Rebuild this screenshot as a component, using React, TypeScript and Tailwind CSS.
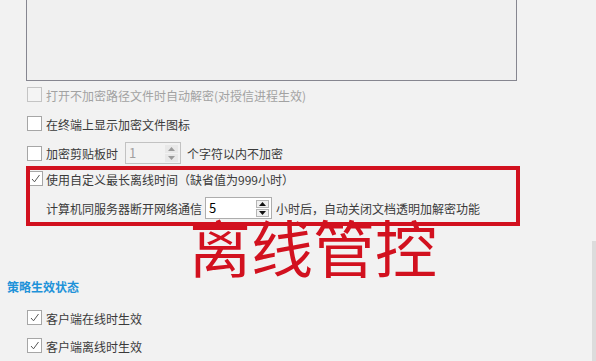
import React from "react";

const Check = () => (
  <svg width="15" height="15" viewBox="0 0 15 15" className="block">
    <path d="M4 8 L6.5 10.8 L11.5 4" fill="none" stroke="#444" strokeWidth="0.9" />
  </svg>
);

function Box({ checked, disabled }: { checked?: boolean; disabled?: boolean }) {
  return (
    <div
      className={
        "w-[15px] h-[15px] shrink-0 border " +
        (disabled ? "border-[#c4c4c4] bg-[#f4f4f4]" : "border-[#a6a6a6] bg-white")
      }
    >
      {checked && <div className="-m-px"><Check /></div>}
    </div>
  );
}

function Spin({ value, disabled, w }: { value: string; disabled?: boolean; w: string }) {
  const tri = disabled ? "#9a9a9a" : "#111";
  return (
    <div
      className={
        "h-[22px] flex items-center justify-between border pl-[3px] pr-[2px] " +
        w +
        (disabled ? " border-[#c2c2c2] bg-[#f2f2f2]" : " border-[#adadad] bg-white")
      }
    >
      <span className={"text-[13px] leading-[16px] " + (disabled ? "text-[#a0a0a0]" : "text-black")}>{value}</span>
      <div className="flex flex-col gap-px">
        <div
          className={
            "w-[13px] h-[8px] flex items-center justify-center " +
            (disabled ? "bg-[#e8e8e8]" : "bg-[#f0f0f0] border border-[#b5b5b5]")
          }
        >
          <svg width="7" height="4" viewBox="0 0 7 4"><path d="M0 4 L3.5 0 L7 4 Z" fill={tri} /></svg>
        </div>
        <div
          className={
            "w-[13px] h-[8px] flex items-center justify-center " +
            (disabled ? "bg-[#e8e8e8]" : "bg-[#f0f0f0] border border-[#b5b5b5]")
          }
        >
          <svg width="7" height="4" viewBox="0 0 7 4"><path d="M0 0 L3.5 4 L7 0 Z" fill={tri} /></svg>
        </div>
      </div>
    </div>
  );
}

export default function App() {
  return (
    <div
      className="relative w-[596px] h-[361px] overflow-hidden bg-[#f2f2f2] text-[12px] leading-[16px] text-[#3a3a3a]"
      style={{ fontFamily: '"Noto Sans CJK SC", "Noto Sans", sans-serif' }}
    >
      <div className="flex flex-col">
        <div className="ml-[26px] w-[491px] h-[81px] border-x border-b border-[#868690] bg-[#f0f0f0]" />

        <div className="mt-[6px] ml-[27px] flex items-center h-[15px]">
          <Box disabled />
          <span className="ml-[4px] mt-[2px] text-[#a2a2a2]">打开不加密路径文件时自动解密(对授信进程生效)</span>
        </div>

        <div className="mt-[14px] ml-[27px] flex items-center h-[15px]">
          <Box />
          <span className="ml-[4px] mt-[2px]">在终端上显示加密文件图标</span>
        </div>

        <div className="mt-[11px] ml-[27px] flex items-center h-[22px]">
          <Box />
          <span className="ml-[4px] mt-[1px]">加密剪贴板时</span>
          <div className="ml-[7px]">
            <Spin value="1" disabled w="w-[56px]" />
          </div>
          <span className="ml-[6px] mt-[1px]">个字符以内不加密</span>
        </div>

        <div className="mt-[7px] ml-[28px] flex items-center h-[15px]">
          <Box checked />
          <span className="ml-[3px] mt-[2px]">使用自定义最长离线时间（缺省值为999小时）</span>
        </div>

        <div className="mt-[11px] ml-[46px] flex items-center h-[22px]">
          <span className="mt-[1px]">计算机同服务器断开网络通信</span>
          <div className="ml-[3px]">
            <Spin value="5" w="w-[67px]" />
          </div>
          <span className="ml-[4px] mt-[1px]">小时后，自动关闭文档透明加解密功能</span>
        </div>

        <div className="mt-[60px] ml-[7px] h-[16px] flex items-center text-[#1f93d9] font-bold">策略生效状态</div>

        <div className="mt-[15px] ml-[27px] flex items-center h-[15px]">
          <Box checked />
          <span className="ml-[4px] mt-[2px]">客户端在线时生效</span>
        </div>

        <div className="mt-[13px] ml-[27px] flex items-center h-[15px]">
          <Box checked />
          <span className="ml-[4px] mt-[2px]">客户端离线时生效</span>
        </div>
      </div>

      <div className="absolute left-[26px] top-[166px] w-[494px] h-[60px] border-4 border-[#d2111f]" />
      <div className="absolute left-[189px] top-[220px] text-[62px] leading-[52px] text-[#d2111f]">离线管控</div>
      <div className="absolute right-0 top-[241px] w-[4px] h-[120px] bg-[#dcdcdc]" />
    </div>
  );
}
